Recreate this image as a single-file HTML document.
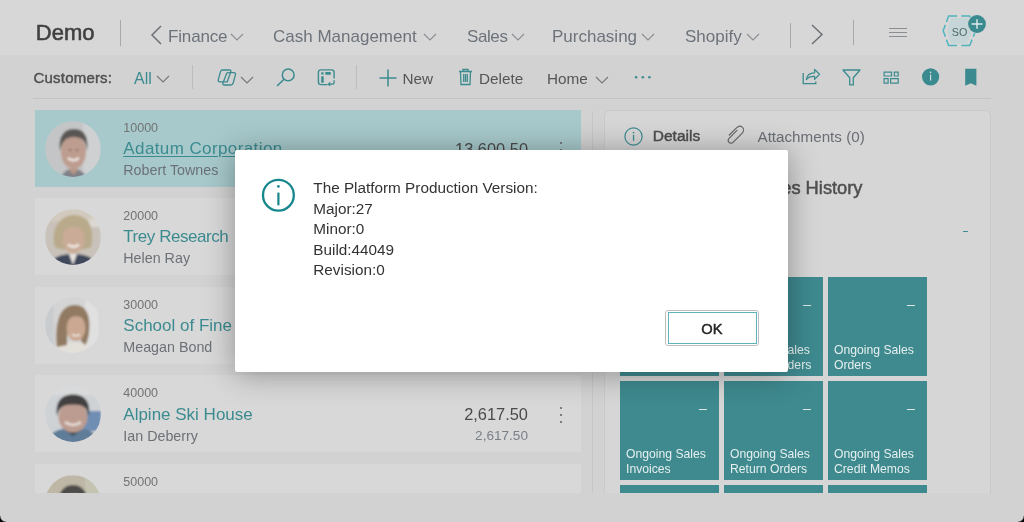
<!DOCTYPE html>
<html><head><meta charset="utf-8">
<style>
*{margin:0;padding:0;box-sizing:border-box}
html,body{width:1024px;height:522px;overflow:hidden;background:#d2d2d2;font-family:"Liberation Sans",sans-serif}
body{will-change:transform}
.a{position:absolute;white-space:nowrap;line-height:1}
#hdr{position:absolute;left:0;top:0;width:1024px;height:55px;background:#d7d7d7}
.nav{font-size:17px;color:#6d737b;top:28.3px}
.sep{position:absolute;width:1px;background:#a9a9a9}
.tb{font-size:15.3px;color:#555;top:70.7px}
.card{position:absolute;left:35px;width:546px;height:77px;background:#d8d8d8}
.card.sel{background:#a7c9cb}
.num{font-size:12.5px;color:#737373}
.name{font-size:17px;color:#3b8b90}
.contact{font-size:14.3px;color:#6c7077}
.amt{font-size:16.4px;color:#4a4a4a;text-align:right}
.amt2{font-size:13.6px;color:#7a8088;text-align:right}
.tile{position:absolute;width:99px;height:99px;background:#3e8a8f;color:#e6efef;font-size:12.2px;line-height:15px}
.tile .t{position:absolute;left:6px;bottom:2.8px;white-space:nowrap}
.tile .d{position:absolute;right:12px;top:28.2px;width:8px;height:1.7px;background:#d9e7e8}
</style></head><body>
<div id="hdr"></div>
<div class="a" style="left:35.8px;top:22.48px;font-size:22px;-webkit-text-stroke:0.55px #404040;color:#404040">Demo</div>
<div class="sep" style="left:120px;top:20px;height:26px"></div>

<svg class="a" style="left:150px;top:25px" width="14" height="20" viewBox="0 0 14 20"><path d="M11 1 L2 10 L11 19" fill="none" stroke="#6c7077" stroke-width="1.5"/></svg>
<div class="a nav" style="left:168px;letter-spacing:-0.15px">Finance</div>
<div class="a nav" style="left:273px">Cash Management</div>
<div class="a nav" style="left:467px;letter-spacing:-0.4px">Sales</div>
<div class="a nav" style="left:552px">Purchasing</div>
<div class="a nav" style="left:685px">Shopify</div>

<div class="sep" style="left:790px;top:23px;height:25px"></div>
<svg class="a" style="left:810px;top:24px" width="14" height="21" viewBox="0 0 14 21"><path d="M2 1 L12 10.5 L2 20" fill="none" stroke="#6c7077" stroke-width="1.5"/></svg>
<div class="sep" style="left:853px;top:20px;height:25px"></div>
<svg class="a" style="left:888px;top:27px" width="20" height="11" viewBox="0 0 20 11"><path d="M1 1.5H19M1 5.5H19M1 9.5H19" stroke="#8a8d92" stroke-width="1.2"/></svg>


<svg class="a" style="left:230px;top:33px" width="14" height="8" viewBox="0 0 14 8"><path d="M1 1L7 7L13 1" fill="none" stroke="#8a8d92" stroke-width="1.1"/></svg>
<svg class="a" style="left:422.5px;top:33px" width="14" height="8" viewBox="0 0 14 8"><path d="M1 1L7 7L13 1" fill="none" stroke="#8a8d92" stroke-width="1.1"/></svg>
<svg class="a" style="left:510.5px;top:33px" width="14" height="8" viewBox="0 0 14 8"><path d="M1 1L7 7L13 1" fill="none" stroke="#8a8d92" stroke-width="1.1"/></svg>
<svg class="a" style="left:640.5px;top:33px" width="14" height="8" viewBox="0 0 14 8"><path d="M1 1L7 7L13 1" fill="none" stroke="#8a8d92" stroke-width="1.1"/></svg>
<svg class="a" style="left:746px;top:33px" width="14" height="8" viewBox="0 0 14 8"><path d="M1 1L7 7L13 1" fill="none" stroke="#8a8d92" stroke-width="1.1"/></svg>
<svg class="a" style="left:936px;top:8px" width="56" height="44" viewBox="0 0 56 44">
 <path d="M11 22.8L15 10H31.5L36 22.8L31.5 35.6H15Z" fill="#c6d5d7"/>
 <path d="M9.36 28.68L7.2 22.8L9.36 16.88M10.44 13.92L12.6 8L21.04 8.00M25.26 8.00L33.7 8L36.06 13.92M37.24 16.88L39.6 22.8L37.24 28.68M36.06 31.62L33.7 37.5L25.26 37.50M21.04 37.50L12.6 37.5L10.44 31.62" fill="none" stroke="#4fb4bd" stroke-width="1.5" stroke-linejoin="round"/>
 <text x="23.6" y="27.5" font-family="Liberation Sans" font-size="10.8" fill="#4d6b6e" text-anchor="middle">SO</text>
 <circle cx="41" cy="16" r="9.6" fill="#d3d6d6"/>
 <circle cx="41" cy="16" r="8.9" fill="#3b8a8f"/>
 <path d="M41 11.3V20.7M35.6 16H46.4" stroke="#e0eded" stroke-width="1.4"/>
</svg>
<div id="toolbar"></div>
<div class="a" style="left:33.5px;top:70.30px;letter-spacing:0.2px;font-size:15px;-webkit-text-stroke:0.45px #505050;color:#505050">Customers:</div>
<div class="a" style="left:134px;top:70.5px;font-size:16px;color:#3b8b90">All</div>
<div class="sep" style="left:192px;top:65px;height:24px;background:#bdbdbd"></div>
<div class="sep" style="left:356px;top:65px;height:24px;background:#bdbdbd"></div>
<div class="a tb" style="left:402.5px">New</div>
<div class="a tb" style="left:479px">Delete</div>
<div class="a tb" style="left:547px">Home</div>

<svg class="a" style="left:156px;top:75px" width="14" height="8" viewBox="0 0 14 8"><path d="M1 1L7 7L13 1" fill="none" stroke="#777" stroke-width="1.1"/></svg>
<svg class="a" style="left:212px;top:64px" width="30" height="26" viewBox="0 0 30 26">
 <path d="M10.5 6H17.5Q19.3 6 18.8 7.8L15.2 17.8H8Q5.8 17.8 6.3 15.6L8.5 7.6Q9 6 10.5 6Z" fill="none" stroke="#3b8b90" stroke-width="1.3"/>
 <path d="M16.5 8.6H21.8Q23.9 8.6 23.4 10.8L21.2 19Q20.7 21 18.8 21H12.2Q10.4 21 10.9 19.2L14.6 9.6Q15 8.6 16.5 8.6Z" fill="none" stroke="#3b8b90" stroke-width="1.3"/>
</svg>
<svg class="a" style="left:239.5px;top:75.5px" width="14" height="8" viewBox="0 0 14 8"><path d="M1 1L7 7L13 1" fill="none" stroke="#777" stroke-width="1.1"/></svg>
<svg class="a" style="left:276px;top:68px" width="20" height="19" viewBox="0 0 20 19"><circle cx="12.2" cy="6.9" r="5.9" fill="none" stroke="#3b8b90" stroke-width="1.5"/><path d="M8 11.2L1 18" stroke="#3b8b90" stroke-width="1.6"/></svg>
<svg class="a" style="left:316px;top:68px" width="21" height="20" viewBox="0 0 21 20">
 <path d="M11.5 16.6H5Q2.4 16.6 2.4 14V4.4Q2.4 1.9 5 1.9H15.6Q18.1 1.9 18.1 4.4V10.5" fill="none" stroke="#3b8b90" stroke-width="1.4"/>
 <rect x="5.2" y="4.2" width="2.4" height="2.4" rx="0.6" fill="#3b8b90"/>
 <rect x="5.2" y="8.2" width="2.5" height="6.6" rx="0.6" fill="#3b8b90"/>
 <rect x="9.3" y="4" width="5.5" height="2.8" rx="0.6" fill="#3b8b90"/>
 <path d="M18.1 12.3V14.3Q18.1 16.2 16.2 16.2H12.6M14.2 14.5L12.4 16.2L14.2 17.9" fill="none" stroke="#3b8b90" stroke-width="1.3"/>
</svg>
<svg class="a" style="left:379px;top:69px" width="18" height="18" viewBox="0 0 18 18"><path d="M9 0.5V17.5M0.5 9H17.5" stroke="#3b8b90" stroke-width="1.5"/></svg>
<svg class="a" style="left:458px;top:67.5px" width="15" height="18" viewBox="0 0 15 18">
 <path d="M1 3.5H14M5 3.5V1.5H10V3.5M2.5 3.5L3 16.5H12L12.5 3.5M5.7 6V14M7.5 6V14M9.3 6V14" fill="none" stroke="#3b8b90" stroke-width="1.3"/>
</svg>
<svg class="a" style="left:594.5px;top:75.5px" width="14" height="8" viewBox="0 0 14 8"><path d="M1 1L7 7L13 1" fill="none" stroke="#777" stroke-width="1.1"/></svg>
<svg class="a" style="left:634px;top:75px" width="18" height="4" viewBox="0 0 18 4"><circle cx="2.1" cy="2.2" r="1.25" fill="#3b8b90"/><circle cx="8.8" cy="2.2" r="1.25" fill="#3b8b90"/><circle cx="15.4" cy="2.2" r="1.25" fill="#3b8b90"/></svg>
<svg class="a" style="left:796px;top:62px" width="28" height="28" viewBox="0 0 28 28">
 <path d="M7.2 10.9V21.6H19.8V19.4" fill="none" stroke="#3b8b90" stroke-width="1.3"/>
 <path d="M10.3 17.6C11 12.8 14 10.8 18.6 10.8V7.4L23.5 12.3L18.6 17.4V14.4C15 14.2 12.2 15.3 10.3 17.6Z" fill="none" stroke="#3b8b90" stroke-width="1.25" stroke-linejoin="round"/>
</svg>
<svg class="a" style="left:842px;top:69px" width="19" height="17" viewBox="0 0 19 17"><path d="M1 1H18L11.3 8.7V15.9H7.7V8.7Z" fill="none" stroke="#3b8b90" stroke-width="1.3" stroke-linejoin="round"/></svg>
<svg class="a" style="left:876px;top:62px" width="28" height="28" viewBox="0 0 28 28">
 <path d="M8.1 10.1H15.5V14H8.1ZM18.3 10.1H22.2V14H18.3ZM8.1 16.7H12.1V21.1H8.1ZM14.6 16.7H22.2V21.1H14.6Z" fill="none" stroke="#3b8b90" stroke-width="1.2"/>
</svg>
<svg class="a" style="left:921px;top:67px" width="20" height="20" viewBox="0 0 20 20"><circle cx="9.6" cy="9.8" r="8.6" fill="#3b8a8f"/><rect x="9.05" y="7.6" width="1.1" height="6" fill="#d5e3e4"/><circle cx="9.6" cy="5.4" r="0.8" fill="#d5e3e4"/></svg>
<svg class="a" style="left:964px;top:68px" width="14" height="19" viewBox="0 0 14 19"><path d="M1.2 0.7H12.4V17.8L6.8 15.2L1.2 17.8Z" fill="#3b8a8f"/></svg>
<div style="position:absolute;left:33px;top:98px;width:958px;height:1px;background:#c3c3c3"></div>

<!-- list -->
<div class="card sel" style="top:110px"></div>
<div class="card" style="top:198px"></div>
<div class="card" style="top:287px"></div>
<div class="card" style="top:375px"></div>
<div class="card" style="top:464px;height:29px"></div>
<div class="a num" style="left:123.3px;top:121.92px">10000</div>
<div class="a name" style="left:123.3px;top:140.41px;letter-spacing:0.4px;text-decoration:underline;text-decoration-thickness:1.3px;text-underline-offset:2px;">Adatum Corporation</div>
<div class="a contact" style="left:123.3px;top:163.10px">Robert Townes</div>
<div class="a amt" style="right:496px;top:140.82px">13,600.50</div>
<svg class="a" style="left:558.5px;top:140.5px" width="4" height="18" viewBox="0 0 4 18"><circle cx="2" cy="2" r="1.1" fill="#666"/><circle cx="2" cy="9" r="1.1" fill="#666"/><circle cx="2" cy="16" r="1.1" fill="#666"/></svg>
<div class="a num" style="left:123.3px;top:209.92px">20000</div>
<div class="a name" style="left:123.3px;top:228.41px;letter-spacing:-0.45px;">Trey Research</div>
<div class="a contact" style="left:123.3px;top:251.10px">Helen Ray</div>
<svg class="a" style="left:558.5px;top:228.5px" width="4" height="18" viewBox="0 0 4 18"><circle cx="2" cy="2" r="1.1" fill="#666"/><circle cx="2" cy="9" r="1.1" fill="#666"/><circle cx="2" cy="16" r="1.1" fill="#666"/></svg>
<div class="a num" style="left:123.3px;top:298.92px">30000</div>
<div class="a name" style="left:123.3px;top:317.41px;">School of Fine Art</div>
<div class="a contact" style="left:123.3px;top:340.10px">Meagan Bond</div>
<svg class="a" style="left:558.5px;top:317.5px" width="4" height="18" viewBox="0 0 4 18"><circle cx="2" cy="2" r="1.1" fill="#666"/><circle cx="2" cy="9" r="1.1" fill="#666"/><circle cx="2" cy="16" r="1.1" fill="#666"/></svg>
<div class="a num" style="left:123.3px;top:387.42px">40000</div>
<div class="a name" style="left:123.3px;top:405.91px;">Alpine Ski House</div>
<div class="a contact" style="left:123.3px;top:428.60px">Ian Deberry</div>
<div class="a amt" style="right:496px;top:406.32px">2,617.50</div>
<div class="a amt2" style="right:496px;top:429.39px">2,617.50</div>
<svg class="a" style="left:558.5px;top:406.0px" width="4" height="18" viewBox="0 0 4 18"><circle cx="2" cy="2" r="1.1" fill="#666"/><circle cx="2" cy="9" r="1.1" fill="#666"/><circle cx="2" cy="16" r="1.1" fill="#666"/></svg>
<div class="a num" style="left:123.3px;top:475.92px">50000</div>
<svg width="0" height="0" style="position:absolute"><filter id="bl" x="-10%" y="-10%" width="120%" height="120%"><feGaussianBlur stdDeviation="1.2"/></filter></svg>
<svg class="a" style="left:44.8px;top:120.5px" width="56" height="56" viewBox="0 0 56 56"><defs><clipPath id="c1"><circle cx="28" cy="28" r="28"/></clipPath></defs><g clip-path="url(#c1)" filter="url(#bl)"><rect width="56" height="56" fill="#c4c5c6"/>
<rect x="38" y="0" width="18" height="56" fill="#cfd0d1"/>
<path d="M16 58C17 51 22 48 28 48C35 48 40 51 41 58Z" fill="#7f8288"/>
<path d="M23 48L28.5 54L34 48Z" fill="#b49586"/>
<ellipse cx="28.5" cy="31" rx="12.5" ry="17" fill="#bd9d8f"/>
<path d="M15 30C13 15 19 8 29 8C39 8 44 15 42 30C41 21 38 16 29 16C20 16 17 21 15 30Z" fill="#5a5754"/>
<path d="M23 37Q28.5 41.5 34 37" stroke="#ebe3de" stroke-width="2.6" fill="none"/>
<path d="M23.5 29H26.5M30.5 29H33.5" stroke="#6d5d55" stroke-width="1.2"/></g></svg>
<svg class="a" style="left:44.8px;top:208.5px" width="56" height="56" viewBox="0 0 56 56"><defs><clipPath id="c2"><circle cx="28" cy="28" r="28"/></clipPath></defs><g clip-path="url(#c2)" filter="url(#bl)"><rect width="56" height="56" fill="#c9c2ba"/>
<rect x="0" y="0" width="56" height="12" fill="#d2cabe"/>
<rect x="44" y="10" width="12" height="8" fill="#dcd8d2"/>
<path d="M4 58C6 48 16 45 28 45C40 45 50 48 52 58Z" fill="#41485b"/>
<path d="M24 45L28 56L32 45Z" fill="#e6e2dc"/>
<path d="M10 38C5 22 14 6 29 6C44 6 50 20 46 38C41 42 15 42 10 38Z" fill="#b9aa8b"/>
<ellipse cx="28.5" cy="30" rx="11" ry="14.5" fill="#caab97"/>
<path d="M17 24C18 13 39 11 41 24C36 16 22 16 17 24Z" fill="#b9aa8b"/>
<path d="M23 35.5Q28.5 40 34 35.5" stroke="#f0e8e2" stroke-width="2.4" fill="none"/></g></svg>
<svg class="a" style="left:44.8px;top:297px" width="56" height="56" viewBox="0 0 56 56"><defs><clipPath id="c3"><circle cx="28" cy="28" r="28"/></clipPath></defs><g clip-path="url(#c3)" filter="url(#bl)"><rect width="56" height="56" fill="#d4d4d4"/>
<rect x="40" y="4" width="14" height="46" fill="#e0e0e0"/>
<rect x="0" y="8" width="9" height="40" fill="#c9ccce"/>
<path d="M4 60C8 48 18 45 30 45C42 45 48 50 50 60Z" fill="#e3e0da"/>
<path d="M12 50C10 32 12 8 30 8C42 8 46 20 44 36C43 42 42 46 40 48L36 44C38 30 36 20 30 18C24 20 22 30 22 48Z" fill="#927a62"/>
<ellipse cx="31" cy="31" rx="9.5" ry="13" fill="#caa892"/>
<path d="M21 25C22 15 34 12 40 22C33 18 26 18 21 25Z" fill="#927a62"/>
<path d="M27 37.5Q31 40 35 37.5" stroke="#efe6e0" stroke-width="1.6" fill="none"/></g></svg>
<svg class="a" style="left:44.8px;top:385.8px" width="56" height="56" viewBox="0 0 56 56"><defs><clipPath id="c4"><circle cx="28" cy="28" r="28"/></clipPath></defs><g clip-path="url(#c4)" filter="url(#bl)"><rect width="56" height="56" fill="#cfd2d5"/>
<rect x="0" y="0" width="56" height="9" fill="#d8dadc"/>
<rect x="38" y="25" width="18" height="20" fill="#6f8db3"/>
<path d="M0 60C2 47 13 42 28 42C43 42 54 47 56 60Z" fill="#5f7b99"/>
<path d="M20 44L28 50L36 44Z" fill="#3f4a55"/>
<ellipse cx="28" cy="31" rx="14.5" ry="15.5" fill="#bc9c90"/>
<path d="M12 30C10 15 17 8.5 28 8.5C39 8.5 46 15 44 30C42 21 38 18.5 28 18.5C18 18.5 14 21 12 30Z" fill="#424141"/>
<path d="M20 36Q28 42 36 36" stroke="#e6ddd7" stroke-width="2.6" fill="none"/></g></svg>
<svg class="a" style="left:44.8px;top:475px" width="56" height="56" viewBox="0 0 56 56"><defs><clipPath id="c5"><circle cx="28" cy="28" r="28"/></clipPath></defs><g clip-path="url(#c5)" filter="url(#bl)"><rect width="56" height="56" fill="#bfb7a6"/>
<rect x="40" y="0" width="16" height="56" fill="#c4c3b2"/>
<ellipse cx="28" cy="31" rx="12" ry="15" fill="#b79484"/>
<path d="M14 30C12 17 19 10 28 10C37 10 44 17 42 30C40 22 36 19 28 19C20 19 16 22 14 30Z" fill="#4e4c4a"/></g></svg>
<div style="position:absolute;left:592px;top:111px;width:1px;height:382px;background:#c6c6c6"></div>

<!-- panel -->
<div style="position:absolute;left:604px;top:110.2px;width:386.5px;height:383px;background:#d6d6d6;border:1px solid #c9c9c9;border-bottom:none;border-radius:6px 6px 0 0"></div>

<svg class="a" style="left:623.5px;top:126.5px" width="19" height="19" viewBox="0 0 19 19"><circle cx="9.5" cy="9.5" r="8.6" fill="none" stroke="#3b8b90" stroke-width="1.2"/><rect x="8.9" y="7.8" width="1.3" height="6" fill="#3b8b90"/><circle cx="9.5" cy="5.6" r="0.85" fill="#3b8b90"/></svg>
<div class="a" style="left:652.8px;top:128.48px;font-size:15.5px;-webkit-text-stroke:0.45px #4d4d4d;color:#4d4d4d">Details</div>
<svg class="a" style="left:720px;top:120px" width="32" height="30" viewBox="0 0 32 30"><path d="M9.3 15L16.5 7.8C18.5 5.8 21 5.8 22.5 7.3C24 8.8 24 11.3 22 13.3L13.5 21.8C12 23.3 10 23.3 9 22.3C8 21.3 8 19.3 9.5 17.8L17 10.3" fill="none" stroke="#686868" stroke-width="1.2" stroke-linecap="round"/></svg>
<div class="a" style="left:757.5px;top:128.73px;font-size:15.2px;color:#6a6e74">Attachments (0)</div>
<div class="a" style="right:161.5px;top:178.61px;font-size:18.3px;-webkit-text-stroke:0.5px #505050;color:#505050">Sell-to Customer Sales History</div>
<div style="position:absolute;left:963px;top:230.5px;width:4.5px;height:1.5px;background:#3b8b90"></div>
<div class="tile" style="left:620px;top:276.5px"><div class="d"></div><div class="t">Ongoing Sales<br>Quotes</div></div>
<div class="tile" style="left:724px;top:276.5px"><div class="d"></div><div class="t">Ongoing Sales<br>Blanket Orders</div></div>
<div class="tile" style="left:828px;top:276.5px"><div class="d"></div><div class="t">Ongoing Sales<br>Orders</div></div>
<div class="tile" style="left:620px;top:380.5px"><div class="d"></div><div class="t">Ongoing Sales<br>Invoices</div></div>
<div class="tile" style="left:724px;top:380.5px"><div class="d"></div><div class="t">Ongoing Sales<br>Return Orders</div></div>
<div class="tile" style="left:828px;top:380.5px"><div class="d"></div><div class="t">Ongoing Sales<br>Credit Memos</div></div>
<div class="tile" style="left:620px;top:484.5px"><div class="d"></div><div class="t"><br></div></div>
<div class="tile" style="left:724px;top:484.5px"><div class="d"></div><div class="t"><br></div></div>
<div class="tile" style="left:828px;top:484.5px"><div class="d"></div><div class="t"><br></div></div>

<div style="position:absolute;left:0;top:493px;width:1024px;height:29px;background:#d2d2d2"></div>

<!-- dialog -->
<div style="position:absolute;left:235px;top:150px;width:553px;height:222px;background:#fff;border-radius:2px;box-shadow:0 2px 30px rgba(0,0,0,0.34)"></div>

<svg class="a" style="left:261px;top:177.5px" width="35" height="35" viewBox="0 0 35 35"><circle cx="17.4" cy="17.2" r="15.4" fill="none" stroke="#17878c" stroke-width="2.3"/><rect x="16.3" y="14.6" width="2.2" height="12.7" fill="#17878c"/><circle cx="17.4" cy="8.4" r="1.35" fill="#17878c"/></svg>
<div class="a" style="left:313.3px;top:178.1px;font-size:15.3px;line-height:20.5px;color:#333;white-space:pre">The Platform Production Version:
Major:27
Minor:0
Build:44049
Revision:0</div>
<div style="position:absolute;left:665px;top:310px;width:94px;height:36px;border:1.5px solid #bfbfbf;border-radius:3px;background:#fff"></div>
<div style="position:absolute;left:667.5px;top:312px;width:89px;height:32px;border:1.5px solid #5db3b9;background:#fff"></div>
<div class="a" style="left:701.3px;top:322.16px;font-size:14.7px;-webkit-text-stroke:0.45px #262626;color:#262626">OK</div>
<div style="position:absolute;left:0;top:516px;width:6px;height:6px;background:#000;-webkit-mask:radial-gradient(circle at 6px 0,transparent 5px,#000 6.5px)"></div>
<div style="position:absolute;left:1018px;top:516px;width:6px;height:6px;background:#000;-webkit-mask:radial-gradient(circle at 0 0,transparent 5px,#000 6.5px)"></div>
</body></html>
